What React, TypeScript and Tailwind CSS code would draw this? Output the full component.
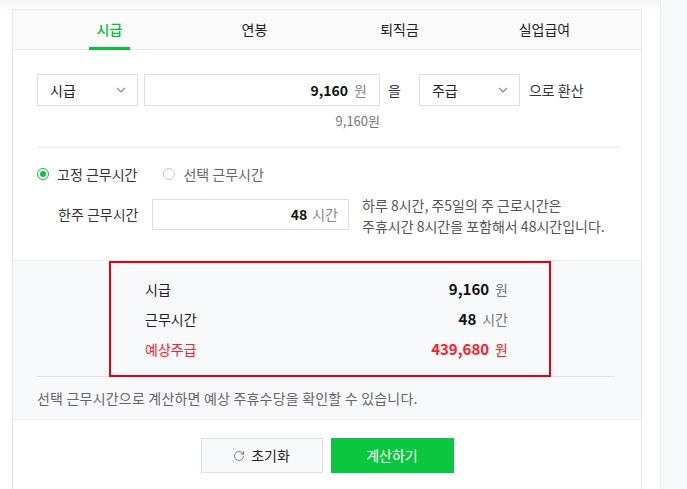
import { RotateCw } from "lucide-react";

const font = { fontFamily: '"Noto Sans CJK KR", "Noto Sans", sans-serif' };

function Chevron() {
  return (
    <svg width="10" height="6" viewBox="0 0 10 6" fill="none">
      <path d="M1 1l4 4 4-4" stroke="#888" strokeWidth="1.1" />
    </svg>
  );
}

function Select({ label }: { label: string }) {
  return (
    <div className="w-[101px] h-[32px] border border-[#dcdfe6] flex items-center justify-between pl-[12px] pr-[11px] text-[14px] text-[#222]">
      <span>{label}</span>
      <Chevron />
    </div>
  );
}

function Radio({ on, label }: { on: boolean; label: string }) {
  return (
    <label className="flex items-center gap-[8px]">
      <span
        className={
          on
            ? "w-[12px] h-[12px] rounded-full border-[1.5px] border-[#0bc13e] flex items-center justify-center"
            : "w-[12px] h-[12px] rounded-full border border-[#c8c8c8]"
        }
      >
        {on && <span className="w-[6px] h-[6px] rounded-full bg-[#0bc13e]" />}
      </span>
      <span className={on ? "text-[#333]" : "text-[#666]"}>{label}</span>
    </label>
  );
}

function ResultRow({ label, value, unit, red }: { label: string; value: string; unit: string; red?: boolean }) {
  return (
    <div className="flex items-center justify-between h-[30px]">
      <span className={red ? "text-[#f5222d]" : "text-[#222]"}>{label}</span>
      <span className="flex items-center gap-[6px]">
        <b className={red ? "text-[15px] font-bold text-[#f5222d]" : "text-[15px] font-bold text-[#111]"}>{value}</b>
        <span className={red ? "text-[#f5222d]" : "text-[#777]"}>{unit}</span>
      </span>
    </div>
  );
}

export default function App() {
  const tabs = ["시급", "연봉", "퇴직금", "실업급여"];
  return (
    <div className="w-[687px] h-[489px] flex overflow-hidden bg-white text-[14px]" style={font}>
      <div className="w-[660px] shrink-0 pl-[12px] pt-[9px] bg-gradient-to-b from-[#f3f3f3] to-white bg-no-repeat [background-size:100%_10px]">
        <div className="w-[630px] border border-[#e6e6e6] bg-white h-[490px]">
          {/* tabs */}
          <div className="h-[40px] bg-[#fafafa] border-b border-[#e8e8e8] flex px-[24px]">
            {tabs.map((t, i) => (
              <div key={t} className="flex-1 flex justify-center">
                <div
                  className={
                    i === 0
                      ? "relative h-full flex items-center px-[8px] text-[#0bb93b] font-medium"
                      : "h-full flex items-center text-[#222]"
                  }
                >
                  {t}
                  {i === 0 && <span className="absolute left-0 right-0 bottom-[-1px] h-[3px] bg-[#0bc13e]" />}
                </div>
              </div>
            ))}
          </div>

          {/* conversion */}
          <div className="pl-[24px] pr-[21px]">
            <div className="pt-[24px] pb-[17px] border-b border-[#e8e8e8]">
              <div className="flex items-center">
                <Select label="시급" />
                <div className="ml-[6px] w-[236px] h-[32px] border border-[#dcdfe6] flex items-center justify-end pr-[12px] gap-[6px]">
                  <b className="text-[14px] font-bold text-[#111]">9,160</b>
                  <span className="text-[#888]">원</span>
                </div>
                <span className="ml-[8px] mr-[18px] text-[#333]">을</span>
                <Select label="주급" />
                <span className="ml-[9px] text-[#333]">으로 환산</span>
              </div>
              <div className="w-[343px] text-right text-[13px] text-[#777] mt-[6px] leading-[18px]">9,160원</div>
            </div>

            {/* hours */}
            <div className="pt-[16px] pb-[23px]">
              <div className="flex items-center gap-[26px] h-[20px]">
                <Radio on label="고정 근무시간" />
                <Radio on={false} label="선택 근무시간" />
              </div>
              <div className="flex items-start mt-[15px]">
                <span className="w-[115px] pl-[21px] text-[#333] leading-[31px]">한주 근무시간</span>
                <div className="w-[197px] h-[31px] border border-[#dcdfe6] flex items-center justify-end pr-[10px] gap-[5px]">
                  <b className="font-bold text-[#111]">48</b>
                  <span className="text-[#888]">시간</span>
                </div>
                <p className="ml-[13px] text-[14px] leading-[21px] text-[#555] -mt-[4px]">
                  하루 8시간, 주5일의 주 근로시간은
                  <br />
                  주휴시간 8시간을 포함해서 48시간입니다.
                </p>
              </div>
            </div>
          </div>

          {/* result */}
          <div className="bg-[#f8f9fa] border-t border-[#ececec] border-b pl-[24px] pr-[26px] pb-[10px]">
            <div className="border-b border-[#e3e3e3]">
              <div className="ml-[72px] w-[442px] border-2 border-[#e60012] pl-[34px] pr-[41px] pt-[11px] pb-[11px] -mb-px">
                <ResultRow label="시급" value="9,160" unit="원" />
                <ResultRow label="근무시간" value="48" unit="시간" />
                <ResultRow label="예상주급" value="439,680" unit="원" red />
              </div>
            </div>
            <p className="mt-[11px] text-[14px] tracking-[0.2px] text-[#666]">선택 근무시간으로 계산하면 예상 주휴수당을 확인할 수 있습니다.</p>
          </div>

          {/* buttons */}
          <div className="flex justify-center gap-[8px] pt-[18px]">
            <button className="w-[122px] h-[35px] border border-[#dcdfe6] bg-[#f8f9fb] flex items-center justify-center gap-[6px] text-[#222]">
              <RotateCw size={12} strokeWidth={1.5} className="text-[#555]" />
              초기화
            </button>
            <button className="w-[123px] h-[35px] bg-[#0bc63f] text-white">계산하기</button>
          </div>
        </div>
      </div>
      <div className="flex-1 border-l border-[#e8eaee] bg-[#f8f9fb]" />
    </div>
  );
}
